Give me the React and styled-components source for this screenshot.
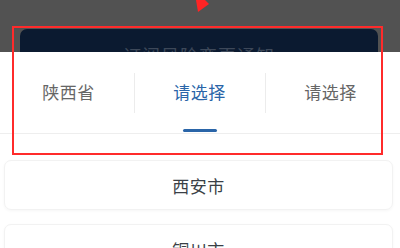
import React from 'react'
import styled, { createGlobalStyle } from 'styled-components'

const GlobalStyle = createGlobalStyle`
  html, body {
    margin: 0;
    padding: 0;
    background: #ffffff;
    font-family: "Noto Sans CJK SC", "Noto Sans", sans-serif;
  }
`

const provinces = ['陕西省', '请选择', '请选择']
const cities = ['西安市', '铜川市', '宝鸡市']

const App = () => {
  const active = 1
  return (
    <Screen>
      <GlobalStyle />
      <Backdrop>
        <NoticeCard>
          <NoticeText>订阅风险变更通知</NoticeText>
        </NoticeCard>
      </Backdrop>
      <Sheet>
        <TabBar>
          {provinces.map((label, i) => (
            <Tab key={i} divided={i > 0}>
              <TabLabel active={i === active}>{label}</TabLabel>
              {i === active && <Underline />}
            </Tab>
          ))}
        </TabBar>
        <List>
          {cities.map((c) => (
            <CityCard key={c}>{c}</CityCard>
          ))}
        </List>
      </Sheet>
      <Highlight />
      <Arrow width="16" height="14" viewBox="0 0 16 14">
        <polygon points="1,0 10,0 14,4 3,12" fill="#ff2424" />
      </Arrow>
    </Screen>
  )
}

const Screen = styled.div`
  position: relative;
  width: 400px;
  height: 248px;
  overflow: hidden;
  background: #ffffff;
`

const Backdrop = styled.div`
  height: 52px;
  background: #525252;
  padding: 29px 22px 0 20px;
  box-sizing: border-box;
  overflow: hidden;
`

const NoticeCard = styled.div`
  height: 60px;
  background: #0b1a30;
  border-radius: 7px;
  display: flex;
  justify-content: center;
  padding-top: 14px;
  box-sizing: border-box;
`

const NoticeText = styled.div`
  color: #3d4859;
  font-size: 18px;
  line-height: 24px;
  letter-spacing: 1px;
`

const Sheet = styled.div`
  background: #ffffff;
`

const TabBar = styled.div`
  display: grid;
  grid-template-columns: repeat(3, 1fr);
  padding: 0 4px 0 3px;
  height: 81px;
  border-bottom: 1px solid #eeeeee;
`

const Tab = styled.div`
  position: relative;
  display: flex;
  align-items: center;
  justify-content: center;
  &::before {
    content: '';
    display: ${({ divided }) => (divided ? 'block' : 'none')};
    position: absolute;
    left: 0;
    top: 21px;
    bottom: 20px;
    width: 1px;
    background: #ececec;
  }
`

const TabLabel = styled.span`
  font-size: 17px;
  color: ${({ active }) => (active ? '#2a65a8' : '#666666')};
  letter-spacing: 0.5px;
  margin-top: -2px;
`

const Underline = styled.div`
  position: absolute;
  bottom: 1px;
  left: 50%;
  margin-left: -17px;
  width: 34px;
  height: 3px;
  border-radius: 2px;
  background: #2a65a8;
`

const List = styled.div`
  display: flex;
  flex-direction: column;
  gap: 14px;
  padding: 26px 7px 0 4px;
`

const CityCard = styled.div`
  height: 48px;
  display: flex;
  align-items: center;
  justify-content: center;
  border: 1px solid #f2f2f2;
  border-radius: 7px;
  box-shadow: 0 1px 3px rgba(0, 0, 0, 0.04);
  font-size: 17px;
  color: #3a3f46;
  letter-spacing: 0.5px;
`

const Highlight = styled.div`
  position: absolute;
  left: 12px;
  top: 26px;
  width: 367px;
  height: 125px;
  border: 2px solid #ff2b2b;
  pointer-events: none;
`

const Arrow = styled.svg`
  position: absolute;
  left: 195px;
  top: 0;
`

export default App
